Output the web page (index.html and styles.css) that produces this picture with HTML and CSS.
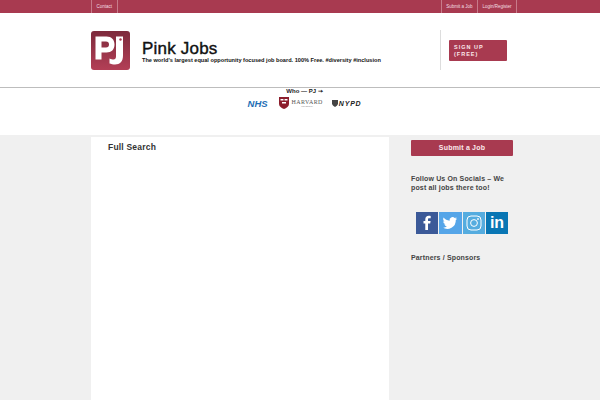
FILE: index.html
```html
<!DOCTYPE html>
<html lang="en">
<head>
  <meta charset="UTF-8">
  <title>Pink Jobs</title>
  <link rel="stylesheet" href="styles.css">
</head>
<body>
  <div class="topbar">
    <div class="wrap topbar-inner">
      <div class="top-links"><a class="top-link">Contact</a></div>
      <div class="top-links"><a class="top-link">Submit a Job</a><a class="top-link">Login/Register</a></div>
    </div>
  </div>

  <div class="header">
    <div class="wrap header-inner">
      <div class="logo">
        <svg width="39" height="39" viewBox="0 0 39 39">
          <defs>
            <linearGradient id="logo-bg" x1="0" y1="0" x2="0" y2="1">
              <stop offset="0" stop-color="#7d2a3c"/>
              <stop offset="1" stop-color="#b33f56"/>
            </linearGradient>
          </defs>
          <rect width="39" height="39" rx="3" fill="url(#logo-bg)"/>
          <path d="M4.500 5.500h11c5 0 8 3 8 8s-3 8-8 8h-5v7h-6z M10.500 10.500v6h4.500c2 0 3-1 3-3s-1-3-3-3z" fill="#fff" fill-rule="evenodd"/>
          <path d="M25 5.500h7v19c0 6-3 9-8 9-2 0-4-.5-5.500-1v-5c1.500.7 3 1 4 1 1.500 0 2.500-1 2.500-3z" fill="#fff"/>
          <circle cx="29.500" cy="8.500" r="1.200" fill="#a83a50"/>
        </svg>
      </div>
      <div class="brand">
        <div class="brand-name">Pink Jobs</div>
        <div class="brand-tag">The world's largest equal opportunity focused job board. 100% Free. #diversity #inclusion</div>
      </div>
      <div class="signup-box">
        <a class="signup-btn">SIGN UP (FREE)</a>
      </div>
    </div>
  </div>

  <div class="who">
    <div class="who-title">Who — PJ ➙</div>
    <div class="who-logos">
      <span class="nhs">NHS</span>
      <span class="harvard">
        <svg width="10" height="12" viewBox="0 0 10 12">
          <path d="M0 0h10v7c0 2.500-2.500 4-5 5-2.500-1-5-2.500-5-5z" fill="#8c1d2c"/>
          <path d="M1.500 2h3v1.500h-3zM5.500 2h3v1.500h-3zM3 5h4v1.500H3z" fill="#fff"/>
        </svg>
        <span class="harvard-text">
          <span class="harvard-name">HARVARD</span>
          <span class="harvard-sub">UNIVERSITY</span>
        </span>
      </span>
      <span class="nypd">
        <svg width="6" height="7" viewBox="0 0 6 7"><path d="M0 0h6v3.500C6 5 4.500 6.300 3 7 1.500 6.300 0 5 0 3.500z" fill="#444"/></svg>
        NYPD
      </span>
    </div>
  </div>

  <div class="wrap content">
    <div class="main-card">
      <h2 class="card-title">Full Search</h2>
    </div>
    <div class="sidebar">
      <a class="submit-btn">Submit a Job</a>
      <h3 class="side-title follow">Follow Us On Socials – We post all jobs there too!</h3>
      <div class="socials">
        <span class="social fb">
          <svg width="22" height="22" viewBox="0 0 22 22"><path d="M12 18v-6.500h2.200l.4-2.600H12V7.400c0-.8.200-1.200 1.300-1.200h1.400V3.900c-.3 0-1-.1-2-.1-2 0-3.400 1.200-3.400 3.500v1.600H7.500v2.600h1.800V18z" fill="#fff"/></svg>
        </span>
        <span class="social tw">
          <svg width="22" height="22" viewBox="0 0 22 22"><path d="M18 6.400c-.5.200-1.100.4-1.700.5.600-.4 1-.9 1.300-1.600-.6.300-1.200.6-1.900.7a3 3 0 0 0-5.100 2.700C8.200 8.600 6 7.400 4.600 5.600c-.8 1.400-.4 3.100.9 4-.5 0-.9-.1-1.300-.4 0 1.400 1 2.700 2.400 3-.4.100-.9.100-1.300 0 .4 1.200 1.500 2 2.800 2.100A6 6 0 0 1 3.700 15.600a8.500 8.500 0 0 0 13.100-7.500c.5-.4.900-1 1.200-1.700z" fill="#fff"/></svg>
        </span>
        <span class="social ig">
          <svg width="22" height="22" viewBox="0 0 22 22" fill="none" stroke="#fff" stroke-width="1"><rect x="4" y="4" width="14" height="14" rx="4"/><circle cx="11" cy="11" r="3.400"/><circle cx="15" cy="7" r=".5" fill="#fff"/></svg>
        </span>
        <span class="social li">in</span>
      </div>
      <h3 class="side-title partners">Partners / Sponsors</h3>
    </div>
  </div>
</body>
</html>
```

FILE: styles.css
```css
body {
  margin: 0;
  background: #f0f0f0;
  font-family: "Liberation Sans", Arial, sans-serif;
  color: #222;
  height: 400px;
  overflow: hidden;
}
.wrap {
  width: 440px;
  margin-left: 91px;
}
.topbar {
  height: 13px;
  background: #a83a50;
}
.topbar-inner {
  display: flex;
  justify-content: space-between;
  width: 426px;
}
.top-links {
  display: flex;
}
.top-link {
  font-size: 4.500px;
  line-height: 13px;
  padding: 0 4.500px;
  color: #f3dfe3;
  border-left: 1px solid #c77b8a;
}
.top-link:last-child {
  border-right: 1px solid #c77b8a;
}
.header {
  height: 74px;
  background: #fff;
  border-bottom: 1px solid #bdbdbd;
}
.header-inner {
  display: flex;
  align-items: center;
  height: 74px;
}
.logo {
  width: 39px;
  height: 39px;
  margin-right: 12px;
}
.brand {
  width: 298px;
  margin-top: 3px;
}
.brand-name {
  font-size: 17px;
  line-height: 17px;
  letter-spacing: .2px;
  color: #111;
  -webkit-text-stroke: 0.4px #111;
}
.brand-tag {
  font-size: 5.600px;
  line-height: 8px;
  margin-top: -1px;
  font-weight: bold;
  color: #111;
  white-space: nowrap;
}
.signup-box {
  border-left: 1px solid #ddd;
  height: 40px;
  display: flex;
  align-items: center;
  padding-left: 8px;
}
.signup-btn {
  width: 53px;
  height: 17px;
  padding: 4px 0 0 5px;
  background: #a83a50;
  border-radius: 1px;
  color: #fbe9ec;
  font-size: 5.500px;
  line-height: 7px;
  font-weight: bold;
  letter-spacing: 1px;
}
.who {
  height: 47px;
  background: #fff;
  text-align: center;
}
.who-title {
  font-size: 6px;
  line-height: 7px;
  font-weight: bold;
  color: #222;
  padding-left: 9px;
}
.who-logos {
  display: flex;
  align-items: center;
  justify-content: center;
  padding-left: 9px;
  gap: 11px;
  height: 16px;
}
.nhs {
  font-size: 9.500px;
  font-weight: bold;
  font-style: italic;
  color: #1f6fb5;
}
.harvard {
  display: flex;
  align-items: center;
  gap: 3px;
}
.harvard-text {
  display: flex;
  flex-direction: column;
  align-items: center;
}
.harvard-name {
  font-family: "Liberation Serif", serif;
  font-size: 6px;
  line-height: 6px;
  letter-spacing: .4px;
  color: #555;
}
.harvard-sub {
  font-size: 2px;
  line-height: 3px;
  color: #888;
}
.nypd {
  display: flex;
  align-items: center;
  gap: 1px;
  margin-left: -2px;
  font-size: 7px;
  font-weight: bold;
  font-style: italic;
  letter-spacing: .8px;
  color: #222;
}
.content {
  display: flex;
  margin-top: 2px;
}
.main-card {
  width: 298px;
  height: 263px;
  background: #fff;
}
.card-title {
  margin: 5px 0 0 17px;
  font-size: 8.500px;
  line-height: 10px;
  letter-spacing: .2px;
  color: #333;
}
.sidebar {
  width: 102px;
  margin-left: 22px;
}
.submit-btn {
  display: block;
  margin-top: 3px;
  height: 16px;
  line-height: 16px;
  background: #a83a50;
  border-radius: 1px;
  color: #fbe9ec;
  font-size: 7px;
  font-weight: bold;
  letter-spacing: .2px;
  text-align: center;
}
.side-title {
  margin: 0;
  font-size: 7px;
  line-height: 9px;
  color: #444;
  letter-spacing: .15px;
}
.follow {
  margin-top: 18px;
}
.socials {
  display: flex;
  gap: 1px;
  margin: 20px 0 0 5px;
}
.social {
  width: 22.300px;
  height: 22px;
  display: flex;
  align-items: center;
  justify-content: center;
}
.fb { background: #3b5998; }
.tw { background: #55a5e8; }
.ig { background: #55acdf; }
.li {
  background: #0976b4;
  color: #fff;
  font-size: 16px;
  font-weight: bold;
}
.partners {
  margin-top: 19px;
}
```
